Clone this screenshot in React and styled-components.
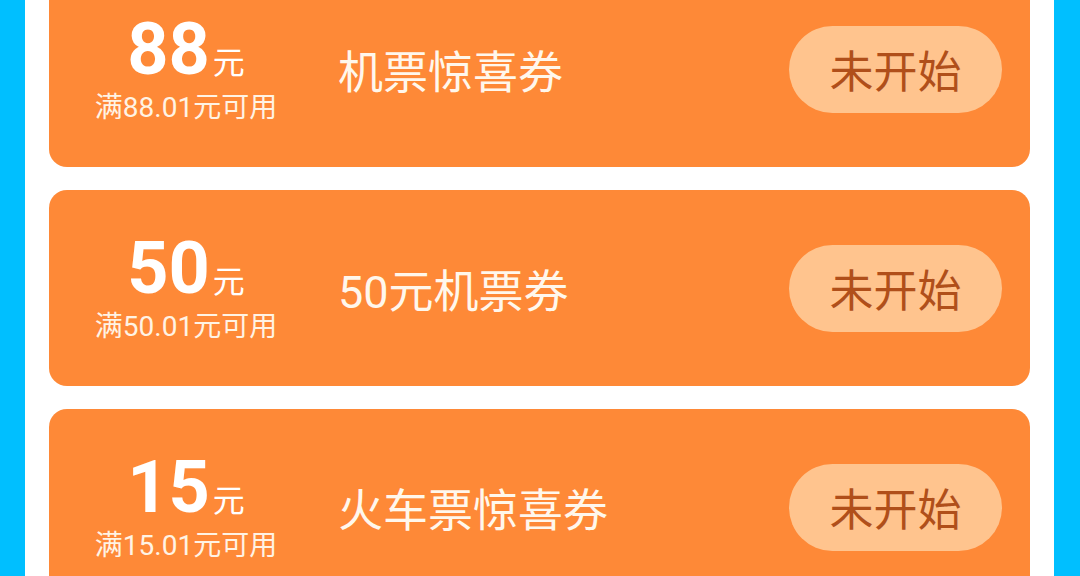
import styled, { createGlobalStyle } from "styled-components";

const GlobalStyle = createGlobalStyle`
  html, body {
    margin: 0;
    padding: 0;
    background: #00bfff;
    overflow: hidden;
  }
  body {
    font-family: Roboto, "Noto Sans CJK SC", sans-serif;
  }
`;

const Page = styled.div`
  height: 576px;
  margin: 0 26px 0 25px;
  background: #ffffff;
  overflow: hidden;
`;

const List = styled.div`
  display: flex;
  flex-direction: column;
  gap: 23px;
  padding: 0 24px;
  margin-top: -29px;
`;

const Card = styled.div`
  height: 196px;
  border-radius: 18px;
  background: #fe8937;
  display: flex;
  align-items: center;
  padding-right: 28px;
`;

const Value = styled.div`
  width: 274px;
  flex: 0 0 auto;
  display: flex;
  flex-direction: column;
  align-items: center;
  color: #ffffff;
`;

const Amount = styled.div`
  display: flex;
  align-items: baseline;
  line-height: 72px;
`;

const Number = styled.span`
  font-size: 72px;
  font-weight: 700;
`;

const Unit = styled.span`
  font-size: 32px;
  margin-left: 3px;
`;

const Condition = styled.div`
  font-size: 28px;
  line-height: 34px;
  margin-top: -8px;
  color: #fff3e4;
`;

const Title = styled.div`
  flex: 1;
  margin-left: 15px;
  font-size: 45px;
  color: #fff7ec;
  white-space: nowrap;
`;

const StatusButton = styled.button`
  width: 213px;
  height: 87px;
  border: none;
  border-radius: 44px;
  background: #ffc48e;
  color: #b04f1a;
  font-family: inherit;
  font-size: 44px;
  padding: 0;
  cursor: pointer;
`;

const coupons = [
  { amount: "88", min: "88.01", title: "机票惊喜券" },
  { amount: "50", min: "50.01", title: "50元机票券" },
  { amount: "15", min: "15.01", title: "火车票惊喜券" },
];

export default function App() {
  return (
    <>
      <GlobalStyle />
      <Page>
        <List>
          {coupons.map((c) => (
            <Card key={c.amount}>
              <Value>
                <Amount>
                  <Number>{c.amount}</Number>
                  <Unit>元</Unit>
                </Amount>
                <Condition>满{c.min}元可用</Condition>
              </Value>
              <Title>{c.title}</Title>
              <StatusButton>未开始</StatusButton>
            </Card>
          ))}
        </List>
      </Page>
    </>
  );
}
